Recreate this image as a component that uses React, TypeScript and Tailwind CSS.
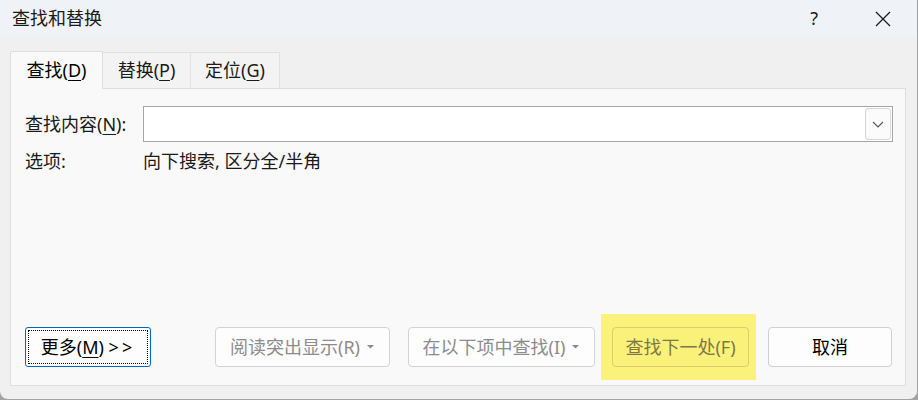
import { useState } from "react";

const font = { fontFamily: '"Noto Sans", "Noto Sans CJK SC", sans-serif' };

const Caret = () => (
  <svg width="9" height="6" viewBox="0 0 9 6" className="ml-[6px]">
    <path d="M1 1 L4.5 4.5 L8 1 Z" fill="#8a8a8a" />
  </svg>
);

const Tab = ({
  label,
  hot,
  active,
  onClick,
}: {
  label: string;
  hot: string;
  active: boolean;
  onClick: () => void;
}) => (
  <div
    onClick={onClick}
    className={
      active
        ? "h-[38px] w-[93px] flex items-center justify-center bg-[#f9f9f9] border border-b-0 border-[#dedede] rounded-t-[2px] text-[18px] text-black -mb-px z-10"
        : "h-[36px] flex items-center justify-center bg-[#f3f3f3] border border-b-0 border-l-0 border-[#e2e2e2] text-[18px] text-[#1a1a1a]"
    }
  >
    <span>
      {label}(<span className="underline underline-offset-[3px]">{hot}</span>)
    </span>
  </div>
);

export default function App() {
  const [tab, setTab] = useState(0);
  const [query, setQuery] = useState("");

  return (
    <div className="w-[918px] h-[400px] bg-[#a3a3a3]" style={font}>
      <div className="w-[917px] h-[399px] bg-[#f0f0f0] rounded-b-[8px] flex flex-col overflow-hidden">
        {/* title bar */}
        <div className="h-[37px] bg-[#eff3f8] flex items-center pl-[12px] shrink-0">
          <span className="text-[18px] text-[#1b1b1b]">查找和替换</span>
          <span className="ml-auto text-[18px] text-[#1b1b1b] mr-[57px]">?</span>
          <svg width="16" height="16" viewBox="0 0 16 16" className="mr-[26px]">
            <path d="M1 1 L15 15 M15 1 L1 15" stroke="#1b1b1b" strokeWidth="1.3" />
          </svg>
        </div>

        {/* body */}
        <div className="flex-1 flex flex-col pl-[10px] pr-[11px] pt-[13px] pb-[13px]">
          <div className="flex items-end h-[38px]">
            <Tab label="查找" hot="D" active={tab === 0} onClick={() => setTab(0)} />
            <div className="w-[88px]">
              <Tab label="替换" hot="P" active={tab === 1} onClick={() => setTab(1)} />
            </div>
            <div className="w-[89px]">
              <Tab label="定位" hot="G" active={tab === 2} onClick={() => setTab(2)} />
            </div>
          </div>

          <div className="flex-1 bg-[#f9f9f9] border border-[#dedede] flex flex-col pl-[14px] pr-[12px] pt-[17px] pb-[5px] text-[18px] text-[#1a1a1a]">
            <div className="flex items-center">
              <span className="w-[118px] shrink-0">
                查找内容(<span className="underline underline-offset-[3px]">N</span>):
              </span>
              <div className="flex-1 h-[36px] bg-white border border-[#a5a5a5] flex items-center pr-[1px]">
                <input
                  value={query}
                  onChange={(e) => setQuery(e.target.value)}
                  className="flex-1 h-full px-2 outline-none bg-transparent text-[18px]"
                />
                <div className="w-[26px] h-[32px] bg-[#fbfbfb] border border-[#d6d6d6] rounded-[3px] flex items-center justify-center">
                  <svg width="12" height="7" viewBox="0 0 12 7">
                    <path d="M1 1 L6 6 L11 1" stroke="#555" strokeWidth="1.1" fill="none" />
                  </svg>
                </div>
              </div>
            </div>

            <div className="flex items-center mt-[6px]">
              <span className="w-[118px] shrink-0">选项:</span>
              <span>向下搜索, 区分全/半角</span>
            </div>

            <div className="mt-auto flex items-center">
              <button className="w-[126px] h-[40px] border border-[#0067c0] rounded-[3px] bg-[#fdfdfd] p-[2px]">
                <div className="w-full h-full border border-dotted border-black flex items-center justify-center text-[18px] text-black">
                  <span>
                    更多(<span className="underline underline-offset-[3px]">M</span>) <span className="tracking-[3px]">&gt;&gt;</span>
                  </span>
                </div>
              </button>

              <button className="ml-[64px] w-[175px] h-[40px] border border-[#d3d3d3] rounded-[4px] bg-[#fdfdfd] flex items-center justify-center text-[18px] text-[#8c8c8c]">
                阅读突出显示(R)
                <Caret />
              </button>

              <button className="ml-[18px] w-[187px] h-[40px] border border-[#d3d3d3] rounded-[4px] bg-[#fdfdfd] flex items-center justify-center text-[18px] text-[#8c8c8c]">
                在以下项中查找(I)
                <Caret />
              </button>

              <div className="ml-[6px] w-[155px] h-[66px] bg-[#fbf27c] flex items-center pl-[11px]">
                <button className="w-[137px] h-[40px] border border-[#d8cf6e] rounded-[4px] bg-[#faf17b] flex items-center justify-center text-[18px] text-[#7f7746]">
                  查找下一处(F)
                </button>
              </div>

              <button className="ml-[12px] w-[124px] h-[40px] border border-[#d0d0d0] rounded-[4px] bg-[#fdfdfd] flex items-center justify-center text-[18px] text-black">
                取消
              </button>
            </div>
          </div>
        </div>
      </div>
    </div>
  );
}
